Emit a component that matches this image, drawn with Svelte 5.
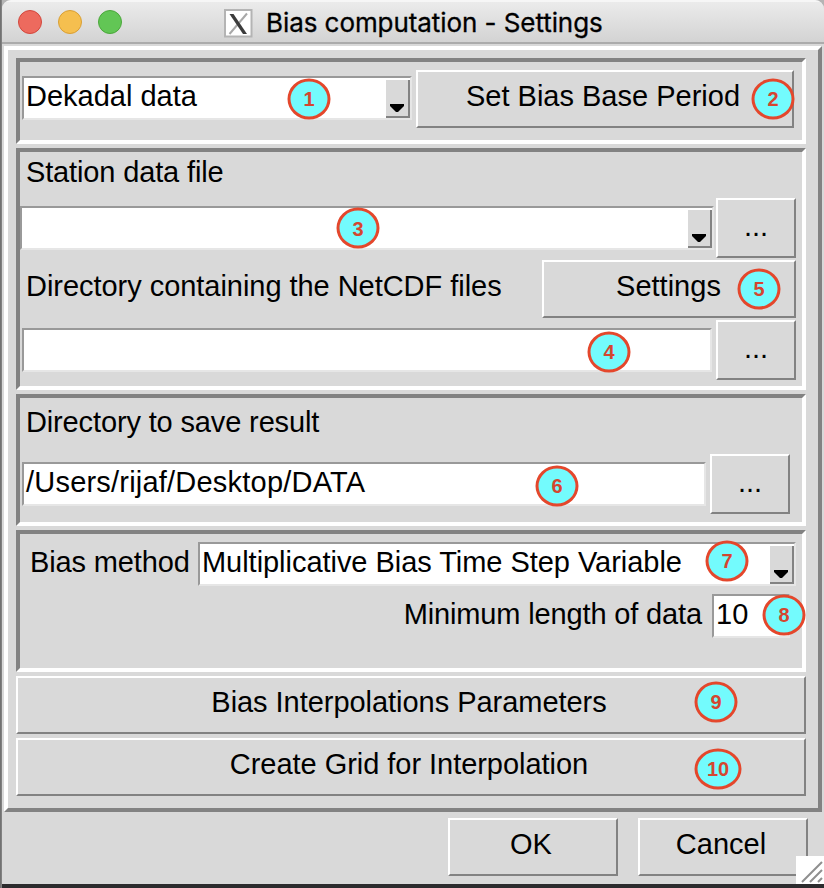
<script>
  const badges = [
    [309, 98.5], [773, 98.5], [358, 228], [609, 351.5], [759, 288.5],
    [557, 485.5], [727, 560.5], [784, 614.5], [716, 701.5], [718, 768.5]
  ];
</script>

{#snippet arrow()}
  <span class="arrow">
    <svg width="14" height="8" viewBox="0 0 14 8">
      <path d="M0 0h14v2L8 8H6L0 2z" fill="#000" />
    </svg>
  </span>
{/snippet}

<div class="screen">
  <div class="window">
    <header>
      <i class="light red"></i><i class="light yellow"></i><i class="light green"></i>
      <svg class="xicon" width="29" height="29" viewBox="0 0 29 29">
        <rect x="1" y="1" width="26.5" height="26.5" fill="#fff" stroke="#b4b4b4" stroke-width="2" />
        <path d="M23 4.5 5.5 25" stroke="#a8a8a8" stroke-width="2" />
        <path d="M5.5 5h4L23 25h-4z" fill="#3c3c3c" />
      </svg>
      <h1>Bias computation - Settings</h1>
    </header>

    <main>
      <section class="g1">
        <div class="field combo w390"><span class="t">Dekadal data</span>{@render arrow()}</div>
        <button class="period"><span class="t">Set Bias Base Period</span></button>
      </section>

      <section class="g2">
        <div class="label l1"><span class="t tight">Station data file</span></div>
        <div class="row r1">
          <div class="field combo w694">{@render arrow()}</div>
          <button class="dots"><span class="t">...</span></button>
        </div>
        <div class="row r2">
          <div class="label"><span class="t snug">Directory containing the NetCDF files</span></div>
          <button class="settings"><span class="t">Settings</span></button>
        </div>
        <div class="row r3">
          <div class="field w690"></div>
          <button class="dots"><span class="t">...</span></button>
        </div>
      </section>

      <section class="g3">
        <div class="label l2"><span class="t tight">Directory to save result</span></div>
        <div class="row r4">
          <div class="field w684"><span class="t loose">/Users/rijaf/Desktop/DATA</span></div>
          <button class="dots"><span class="t">...</span></button>
        </div>
      </section>

      <section class="g4">
        <div class="row r5">
          <div class="label"><span class="t tight">Bias method</span></div>
          <div class="field combo w598"><span class="t snug">Multiplicative Bias Time Step Variable</span>{@render arrow()}</div>
        </div>
        <div class="row r6">
          <div class="label"><span class="t tight">Minimum length of data</span></div>
          <div class="field w78"><span class="t">10</span></div>
        </div>
      </section>

      <button class="wide"><span class="t snug">Bias Interpolations Parameters</span></button>
      <button class="wide"><span class="t snug">Create Grid for Interpolation</span></button>
    </main>

    <footer>
      <button class="act"><span class="t">OK</span></button>
      <button class="act"><span class="t">Cancel</span></button>
    </footer>
  </div>

  <svg class="grip" width="28" height="28" viewBox="0 0 28 28">
    <rect width="28" height="28" fill="#fff" />
    <path d="M6 26 26 6M14 26 26 14M22 26l4-4" stroke="#8f8f8f" stroke-width="2" />
  </svg>

  {#each badges as [x, y], i}
    <span class="badge" class:two={i === 9} style:left="{x}px" style:top="{y}px">{i + 1}</span>
  {/each}
</div>

<style>
  :global(body) { background: #b4b4b4; }
  .screen {
    position: relative; box-sizing: border-box; width: 824px; height: 888px; overflow: hidden;
    padding: 0 0 4px 2px;
    background: linear-gradient(90deg, #6b6b6b, #888 2px, transparent 2px),
      linear-gradient(#b4b4b4 0 884px, #2c2b2d 884px);
    font-family: "Liberation Sans", Arial, Helvetica, sans-serif;
    font-size: 29px; line-height: 32px; color: #000;
  }
  .window { height: 884px; background: #d9d9d9; border-radius: 9px 9px 0 0; overflow: hidden; }
  header {
    box-sizing: border-box; height: 44px; display: flex; align-items: center; padding: 0 0 0 16px;
    border-bottom: 2px solid #ababab;
    background: linear-gradient(#f6f6f6 0 2px, #ebebeb 2px, #d3d3d3);
  }
  .light { box-sizing: border-box; width: 24px; height: 24px; border-radius: 50%; margin-right: 16px; margin-top: 1px; }
  .red { background: #ed6a5e; border: 1.5px solid #d2473d; }
  .yellow { background: #f5bf4f; border: 1.5px solid #d99f34; }
  .green { background: #62c655; border: 1.5px solid #4ba73b; }
  .xicon { margin: 4px 0 0 86px; flex: none; }
  h1 { margin: 4px 0 0 13px; font: 400 26px/32px Inter, sans-serif; letter-spacing: -0.07px; white-space: nowrap; -webkit-text-stroke: 0.3px #000; }
  main {
    box-sizing: border-box; width: 818px; height: 766px; margin: 2px 0 0 2px; padding: 8px;
    border: 4px solid; border-color: #fff #828282 #828282 #fff;
    display: flex; flex-direction: column; gap: 4px;
  }
  section {
    box-sizing: border-box; width: 790px; border: 4px solid; border-color: #828282 #fff #fff #828282;
    flex: none;
  }
  .g1 { height: 86px; display: flex; align-items: flex-start; padding: 14px 0 0 2px; gap: 4px; }
  .g2 { height: 242px; }
  .g3 { height: 132px; }
  .g4 { height: 142px; }
  .t { white-space: nowrap; }
  .tight { letter-spacing: -0.14px; }
  .snug { letter-spacing: -0.04px; }
  .loose { letter-spacing: 0.21px; }
  button {
    box-sizing: border-box; flex: none; margin: 0; padding: 0 4px 6px 0; height: 58px;
    display: flex; align-items: center; justify-content: center;
    border: 2px solid; border-color: #fff #828282 #828282 #fff; border-radius: 0;
    background: #d9d9d9; font: inherit; color: inherit;
  }
  .period { width: 378px; margin-top: -6px; }
  .dots { width: 80px; height: 60px; padding: 0 0 4px; }
  .settings { width: 254px; padding-right: 1px; }
  .wide { width: 790px; }
  .act { width: 170px; }
  .field {
    box-sizing: border-box; height: 44px; flex: none; background: #fff; padding: 0 0 4px 2px;
    border: 2px solid; border-color: #999 #e6e6e6 #e6e6e6 #999;
    display: flex; align-items: center; overflow: hidden;
  }
  .combo { justify-content: space-between; padding: 0 0 0 2px; }
  .combo .t { margin-bottom: 4px; }
  .arrow {
    box-sizing: border-box; width: 24px; height: 38px; margin: 2px 0 0 auto; flex: none;
    border: solid #828282; border-width: 0 2px 2px 0; background: #d9d9d9;
    display: flex; align-items: flex-end; justify-content: center; padding-bottom: 4px;
  }
  .w390 { width: 390px; } .w694 { width: 694px; } .w690 { width: 690px; }
  .w684 { width: 684px; } .w598 { width: 598px; } .w78 { width: 78px; }
  .row { display: flex; align-items: center; }
  .label { display: flex; }
  .l1 { padding: 4px 0 0 6px; height: 32px; }
  .l2 { padding: 8px 0 0 6px; height: 32px; }
  .r1 { height: 60px; margin-top: 10px; gap: 2px; }
  .r2 { height: 58px; margin-top: 2px; padding-left: 6px; justify-content: space-between; padding-right: 6px; }
  .r2 .label { margin-bottom: 6px; }
  .r5 .label, .r6 .label { margin-bottom: 4px; }
  .r3 { height: 60px; margin-top: 2px; padding-left: 2px; gap: 4px; }
  .r4 { height: 60px; margin-top: 16px; padding-left: 2px; gap: 4px; }
  .r5 { height: 44px; margin-top: 8px; padding: 0 6px 0 10px; justify-content: space-between; }
  .r6 { height: 44px; margin-top: 8px; padding-right: 12px; justify-content: flex-end; gap: 10px; }
  footer { display: flex; justify-content: flex-end; gap: 20px; padding: 6px 16px 0 0; }
  .grip { position: absolute; left: 796px; top: 856px; }
  .badge {
    position: absolute; box-sizing: border-box; width: 43px; height: 41px; transform: translate(-50%, -50%);
    border: 3px solid #e4472c; border-radius: 50%; background: #73fbfd;
    display: flex; align-items: center; justify-content: center;
    font-size: 20px; line-height: 20px; font-weight: 700; color: #d5452f;
  }
  .two { width: 47px; }
</style>
